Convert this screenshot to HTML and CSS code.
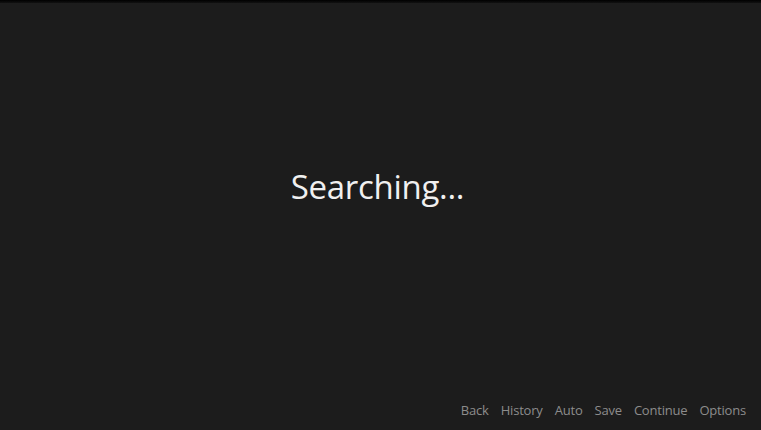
FILE: index.html
```html
<!DOCTYPE html>
<html lang="en">
<head>
    <meta charset="UTF-8">
    <meta name="viewport" content="width=device-width, initial-scale=1.0">
    <title>Searching</title>
    <link rel="stylesheet" href="styles.css">
</head>
<body>

    <div class="screen">
        <div class="top-bar"></div>

        <div class="message">
            <h1>Searching...</h1>
        </div>

        <div class="quick-menu">
            <span class="menu-item">Back</span>
            <span class="menu-item">History</span>
            <span class="menu-item">Auto</span>
            <span class="menu-item">Save</span>
            <span class="menu-item">Continue</span>
            <span class="menu-item">Options</span>
        </div>
    </div>

</body>
</html>
```

FILE: styles.css
```css
html, body {
    margin: 0;
    padding: 0;
    height: 100%;
    background-color: #1c1c1c;
    font-family: "Open Sans", "DejaVu Sans", sans-serif;
}

.screen {
    display: flex;
    flex-direction: column;
    height: 430px;
    overflow: hidden;
}

.top-bar {
    height: 3px;
    background: linear-gradient(#000, #111);
}

.message {
    display: flex;
    justify-content: center;
    padding: 160px 6px 0 0;
    height: 212px;
}

.message h1 {
    margin: 0;
    color: #f0f0f0;
    font-size: 33px;
    font-weight: 400;
    letter-spacing: -0.3px;
    line-height: 48px;
}

.quick-menu {
    display: flex;
    justify-content: flex-end;
    gap: 12px;
    padding: 0 15px 0 0;
    margin-top: 25px;
}

.menu-item {
    color: #8c8c8c;
    font-size: 13px;
    letter-spacing: -0.2px;
    line-height: 20px;
}
```
